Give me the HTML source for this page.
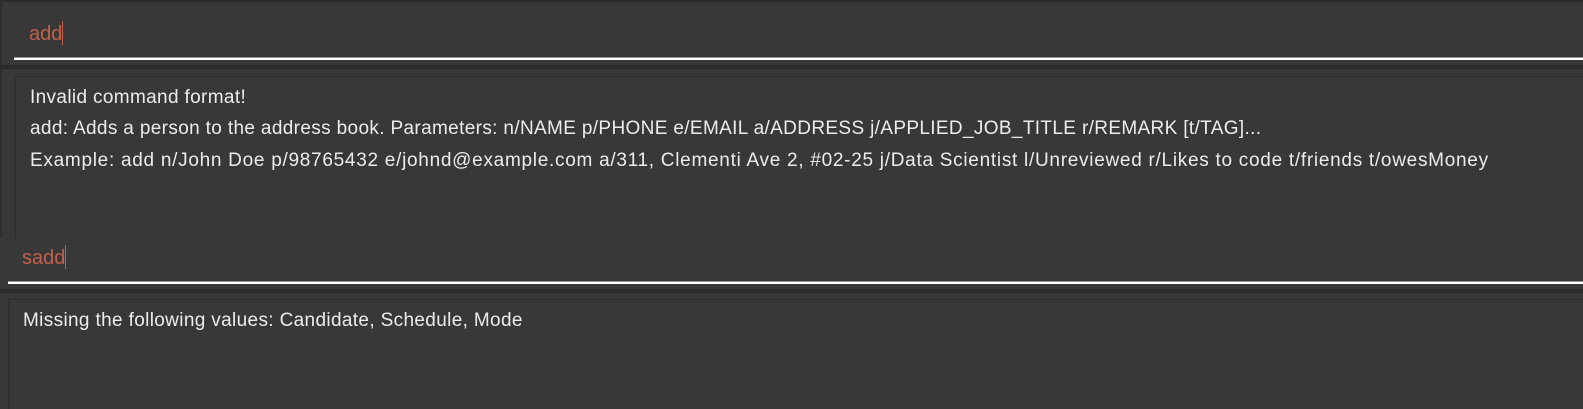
<!DOCTYPE html>
<html><head><meta charset="utf-8"><style>
html,body{margin:0;padding:0;width:1583px;height:409px;overflow:hidden;background:#383838;position:relative;font-family:"Segoe UI","Liberation Sans",sans-serif;}
div{position:absolute;box-sizing:border-box;}
.t{color:#ececec;font-size:19px;letter-spacing:0.35px;white-space:nowrap;}
.r{color:#c0604a;font-size:20px;}
</style></head><body>
<div style="left:0;top:0;width:1583px;height:2px;background:#2a2a2a"></div>
<div style="left:0;top:0;width:2px;height:238px;background:#2e2e2e"></div>
<div class="r" style="left:29px;top:21px">add<span style="display:inline-block;width:1px;height:24px;background:#c0604a;vertical-align:-5px"></span></div>
<div style="left:14px;top:57px;width:1569px;height:3px;background:#fff;border-top:1px solid #999"></div>
<div style="left:0;top:65px;width:1583px;height:4px;background:#2b2b2b"></div>
<div style="left:15px;top:76px;width:1568px;height:162px;border:1px solid #2c2c2c;border-right:none;border-bottom:none"></div>
<div class="t" style="left:30px;top:87px">Invalid command format!</div>
<div class="t" style="left:30px;top:118px">add: Adds a person to the address book. Parameters: n/NAME p/PHONE e/EMAIL a/ADDRESS j/APPLIED_JOB_TITLE r/REMARK [t/TAG]...</div>
<div class="t" style="left:30px;top:150px;letter-spacing:0.72px">Example: add n/John Doe p/98765432 e/johnd@example.com a/311, Clementi Ave 2, #02-25 j/Data Scientist l/Unreviewed r/Likes to code t/friends t/owesMoney</div>
<div style="left:0;top:238px;width:1583px;height:171px;background:#383838"></div>
<div class="r" style="left:22px;top:245px">sadd<span style="display:inline-block;width:1px;height:24px;background:#c0604a;vertical-align:-5px"></span></div>
<div style="left:8px;top:281px;width:1575px;height:3px;background:#fff;border-top:1px solid #999"></div>
<div style="left:0;top:289px;width:1583px;height:4px;background:#2b2b2b"></div>
<div style="left:8px;top:299px;width:1575px;height:110px;border:1px solid #2c2c2c;border-right:none;border-bottom:none"></div>
<div class="t" style="left:23px;top:310px">Missing the following values: Candidate, Schedule, Mode</div>
</body></html>
